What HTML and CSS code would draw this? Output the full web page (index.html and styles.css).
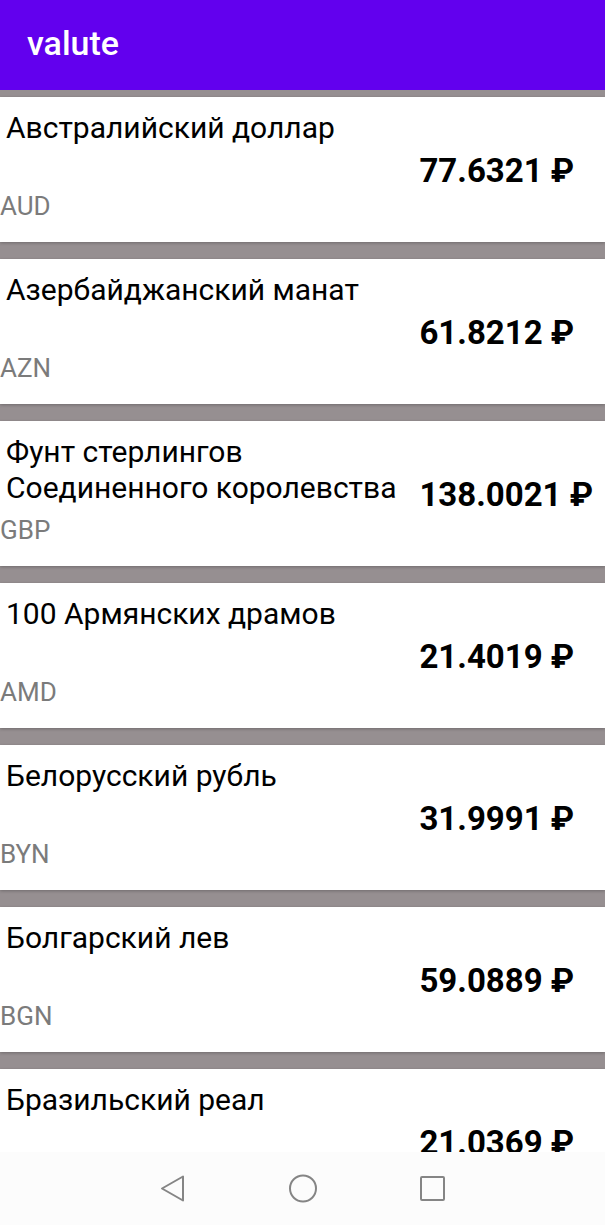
FILE: index.html
```html
<!DOCTYPE html>
<html lang="ru">
<head>
<meta charset="utf-8">
<meta name="viewport" content="width=device-width, initial-scale=1">
<title>valute</title>
<link rel="stylesheet" href="styles.css">
</head>
<body>
<header class="app-bar"><h1 class="app-title">valute</h1></header>
<main class="rates">
<ul class="rate-list">
<li class="card"><div class="currency"><h2 class="name">Австралийский доллар</h2><p class="code">AUD</p></div><p class="value">77.6321 ₽</p></li>
<li class="card"><div class="currency"><h2 class="name">Азербайджанский манат</h2><p class="code">AZN</p></div><p class="value">61.8212 ₽</p></li>
<li class="card"><div class="currency"><h2 class="name">Фунт стерлингов Соединенного королевства</h2><p class="code">GBP</p></div><p class="value">138.0021 ₽</p></li>
<li class="card"><div class="currency"><h2 class="name">100 Армянских драмов</h2><p class="code">AMD</p></div><p class="value">21.4019 ₽</p></li>
<li class="card"><div class="currency"><h2 class="name">Белорусский рубль</h2><p class="code">BYN</p></div><p class="value">31.9991 ₽</p></li>
<li class="card"><div class="currency"><h2 class="name">Болгарский лев</h2><p class="code">BGN</p></div><p class="value">59.0889 ₽</p></li>
<li class="card"><div class="currency"><h2 class="name">Бразильский реал</h2></div><p class="value">21.0369 ₽</p></li>
</ul>
</main>
<nav class="system-nav" aria-label="System">
<button class="nav-button" type="button" aria-label="Back"><svg class="icon" viewBox="0 0 30 30"><path d="M24 2.5V26.5L3 14.5Z"/></svg></button>
<button class="nav-button" type="button" aria-label="Home"><svg class="icon" viewBox="0 0 30 30"><circle cx="15" cy="14.5" r="13"/></svg></button>
<button class="nav-button" type="button" aria-label="Recent apps"><svg class="icon" viewBox="0 0 30 30"><rect x="4" y="3" width="23" height="23" rx="1"/></svg></button>
</nav>
</body>
</html>
```

FILE: styles.css
```css
* {
  box-sizing: border-box;
}

body {
  display: flex;
  flex-direction: column;
  height: 100vh;
  margin: 0;
  background: #968f91;
  color: #000;
  font-family: Roboto, "Noto Sans", sans-serif;
}

h1, h2, p, ul {
  margin: 0;
  padding: 0;
}

.app-bar {
  flex: none;
  padding: 22px 27px 26px;
  background: #6200ee;
  color: #fff;
}

.app-title {
  font-size: 34px;
  font-weight: 500;
  line-height: 42px;
}

.rates {
  flex: 1;
  min-height: 0;
  overflow: hidden;
}

.rate-list {
  display: grid;
  gap: 17px;
  padding-top: 7px;
  list-style: none;
}

.card {
  display: grid;
  grid-template-columns: 69% 1fr;
  align-items: center;
  min-height: 145px;
  background: #fff;
  box-shadow: 0 1px 3px rgba(0, 0, 0, 0.25);
}

.currency {
  display: flex;
  flex-direction: column;
  justify-content: space-between;
  align-self: stretch;
  padding: 13px 0 20px;
}

.name {
  padding-left: 6px;
  font-size: 30px;
  font-weight: 400;
  line-height: 36px;
}

.code {
  color: #7b7b7b;
  font-size: 26px;
  line-height: 32px;
}

.value {
  padding: 2px 0 0 2px;
  font-size: 33px;
  font-weight: 700;
  line-height: 40px;
  white-space: nowrap;
}

.system-nav {
  display: flex;
  flex: none;
  align-items: center;
  justify-content: center;
  gap: 99px;
  height: 73px;
  background: #fcfcfc;
}

.nav-button {
  padding: 0;
  border: 0;
  background: none;
}

.icon {
  display: block;
  width: 30px;
  height: 30px;
  fill: none;
  stroke: #858585;
  stroke-linejoin: round;
  stroke-width: 2;
}
```
